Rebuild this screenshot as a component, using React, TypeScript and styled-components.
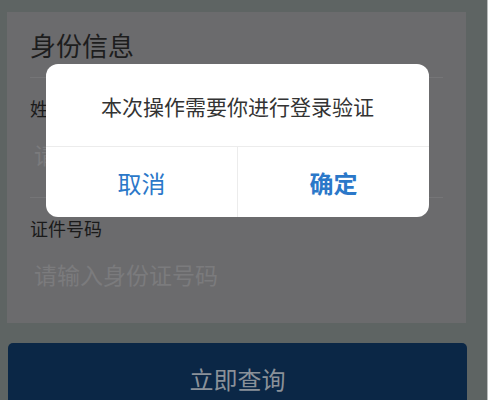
import React from 'react';
import styled, { createGlobalStyle } from 'styled-components';

const GlobalStyle = createGlobalStyle`
  body {
    margin: 0;
    background: #ffffff;
    font-family: "Noto Sans CJK SC", "Noto Sans", sans-serif;
  }
`;

const Phone = styled.div`
  position: relative;
  width: 488px;
  height: 400px;
  padding-top: 12px;
  box-sizing: border-box;
  background: #5e6463;
  border-right: 1px solid #b9bcbc;
  overflow: hidden;
`;

const Card = styled.div`
  margin: 0 21px 0 7px;
  padding: 0 23px 6px;
  background: #6b6b6d;
`;

const Title = styled.div`
  padding: 18px 0 17px;
  font-size: 26px;
  line-height: 30px;
  color: #1d1d1d;
  border-bottom: 1px solid #757577;
`;

const Field = styled.div<{ $last?: boolean }>`
  padding-top: 19px;
  border-bottom: ${({ $last }) => ($last ? 'none' : '1px solid #757577')};
`;

const Label = styled.div`
  font-size: 18px;
  line-height: 22px;
  color: #1a1a1a;
`;

const Placeholder = styled.div`
  box-sizing: border-box;
  height: 78px;
  padding: 22px 0 0 4px;
  font-size: 23px;
  line-height: 26px;
  color: #7b7b7d;
`;

const Footer = styled.div`
  padding: 20px 20px 0 8px;
`;

const SubmitButton = styled.div`
  height: 70px;
  border-radius: 5px;
  background: #0b2746;
  display: flex;
  align-items: center;
  justify-content: center;
  font-size: 24px;
  color: #8a9199;
`;

const Dialog = styled.div`
  position: absolute;
  left: 46px;
  top: 64px;
  width: 383px;
  height: 153px;
  border-radius: 12px;
  background: #ffffff;
  display: flex;
  flex-direction: column;
  overflow: hidden;
`;

const Message = styled.div`
  height: 83px;
  display: flex;
  align-items: center;
  justify-content: center;
  font-size: 21px;
  color: #333333;
  border-bottom: 1px solid #ececec;
  box-sizing: border-box;
  padding-top: 2px;
`;

const Actions = styled.div`
  flex: 1;
  display: flex;
`;

const Action = styled.div<{ $primary?: boolean }>`
  flex: 1;
  display: flex;
  align-items: center;
  justify-content: center;
  font-size: 24px;
  color: #2b78c9;
  font-weight: ${({ $primary }) => ($primary ? 700 : 400)};
  & + & {
    border-left: 1px solid #ececec;
  }
`;

export default function App() {
  return (
    <>
      <GlobalStyle />
      <Phone>
        <Card>
          <Title>身份信息</Title>
          <Field>
            <Label>姓名</Label>
            <Placeholder>请输入姓名</Placeholder>
          </Field>
          <Field $last>
            <Label>证件号码</Label>
            <Placeholder>请输入身份证号码</Placeholder>
          </Field>
        </Card>
        <Footer>
          <SubmitButton>立即查询</SubmitButton>
        </Footer>
        <Dialog>
          <Message>本次操作需要你进行登录验证</Message>
          <Actions>
            <Action>取消</Action>
            <Action $primary>确定</Action>
          </Actions>
        </Dialog>
      </Phone>
    </>
  );
}
